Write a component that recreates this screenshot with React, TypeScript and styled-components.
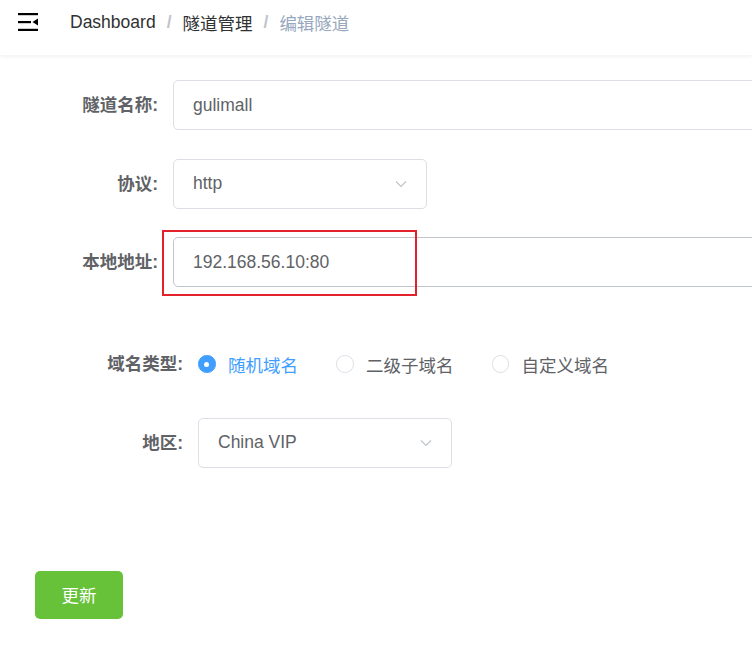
import React from "react";
import styled, { createGlobalStyle } from "styled-components";

const Global = createGlobalStyle`
  html, body { margin: 0; padding: 0; background: #fff; overflow: hidden; }
  body { font-family: "Liberation Sans", "Noto Sans CJK SC", sans-serif; color: #606266; }
  * { box-sizing: border-box; }
`;

const Page = styled.div`
  width: 752px;
  height: 646px;
  overflow: hidden;
  position: relative;
`;

const Header = styled.header`
  height: 55px;
  padding-bottom: 11px;
  display: flex;
  align-items: center;
  background: #fff;
  box-shadow: 0 1px 5px rgba(0, 21, 41, 0.08);
  position: relative;
  z-index: 1;
`;

const Hamburger = styled.div`
  width: 20px;
  height: 18px;
  margin-left: 18px;
  display: flex;
`;

const Breadcrumb = styled.nav`
  display: flex;
  align-items: center;
  margin-left: 32px;
  font-size: 17.5px;
`;

const Crumb = styled.span<{ $last?: boolean }>`
  color: ${(p) => (p.$last ? "#97a8be" : "#303133")};
`;

const Sep = styled.span`
  color: #c0c4cc;
  margin: 0 11px;
  font-weight: bold;
`;

const Main = styled.main`
  padding: 25px 0 0 35px;
`;

const Form = styled.form<{ $labelWidth: number }>`
  display: grid;
  grid-template-columns: ${(p) => p.$labelWidth}px 1fr;
  row-gap: 28.5px;
  align-items: center;
  & + & {
    margin-top: 52px;
  }
`;

const Label = styled.label`
  text-align: right;
  padding-right: 15px;
  font-size: 17.5px;
  font-weight: bold;
  color: #606266;
  line-height: 50px;
`;

const Field = styled.div`
  display: flex;
  align-items: center;
  height: 50px;
  position: relative;
`;

const Input = styled.div<{ $width: number; $hover?: boolean }>`
  width: ${(p) => p.$width}px;
  height: 50px;
  border: 1px solid ${(p) => (p.$hover ? "#c0c4cc" : "#dcdfe6")};
  border-radius: 5px;
  padding: 0 19px;
  display: flex;
  align-items: center;
  justify-content: space-between;
  font-size: 17.5px;
  color: #606266;
  flex-shrink: 0;
  background: #fff;
`;

const Highlight = styled.div`
  position: absolute;
  left: -11px;
  top: -7px;
  width: 255px;
  height: 66px;
  border: 2px solid #e3212b;
  pointer-events: none;
`;

const RadioGroup = styled.div`
  display: flex;
  align-items: center;
`;

const Radio = styled.span`
  display: inline-flex;
  align-items: center;
  margin-right: 38px;
`;

const RadioCircle = styled.span<{ $checked?: boolean }>`
  width: 17.5px;
  height: 17.5px;
  border-radius: 50%;
  border: 1px solid ${(p) => (p.$checked ? "#409eff" : "#dcdfe6")};
  background: ${(p) => (p.$checked ? "#409eff" : "#fff")};
  display: inline-flex;
  align-items: center;
  justify-content: center;
  &::after {
    content: "";
    width: 5px;
    height: 5px;
    border-radius: 50%;
    background: #fff;
    display: ${(p) => (p.$checked ? "block" : "none")};
  }
`;

const RadioText = styled.span<{ $checked?: boolean }>`
  margin-left: 12.5px;
  font-size: 17.5px;
  color: ${(p) => (p.$checked ? "#409eff" : "#606266")};
`;

const Actions = styled.div`
  margin-top: 103px;
`;

const Button = styled.button`
  width: 88px;
  height: 48px;
  border: none;
  border-radius: 5px;
  background: #67c23a;
  color: #fff;
  font-size: 17.5px;
  font-family: inherit;
  cursor: pointer;
`;

const Chevron = () => (
  <svg width="12" height="8" viewBox="0 0 12 8">
    <polyline points="1,1.5 6,6.5 11,1.5" fill="none" stroke="#c0c4cc" strokeWidth="1.2" />
  </svg>
);

const HamburgerIcon = () => (
  <svg width="20" height="18" viewBox="0 0 20 18">
    <rect x="0" y="0" width="20" height="2.2" fill="#000" />
    <rect x="0" y="8" width="13" height="2.2" fill="#000" />
    <polygon points="20,5.5 20,12.5 14.5,9" fill="#000" />
    <rect x="0" y="15.8" width="20" height="2.2" fill="#000" />
  </svg>
);

export default function App() {
  return (
    <Page>
      <Global />
      <Header>
        <Hamburger>
          <HamburgerIcon />
        </Hamburger>
        <Breadcrumb>
          <Crumb>Dashboard</Crumb>
          <Sep>/</Sep>
          <Crumb>隧道管理</Crumb>
          <Sep>/</Sep>
          <Crumb $last>编辑隧道</Crumb>
        </Breadcrumb>
      </Header>
      <Main>
        <Form $labelWidth={138}>
          <Label>隧道名称:</Label>
          <Field>
            <Input $width={640}>gulimall</Input>
          </Field>
          <Label>协议:</Label>
          <Field>
            <Input $width={254}>
              http
              <Chevron />
            </Input>
          </Field>
          <Label>本地地址:</Label>
          <Field>
            <Input $width={640} $hover>192.168.56.10:80</Input>
            <Highlight />
          </Field>
        </Form>
        <Form $labelWidth={163}>
          <Label>域名类型:</Label>
          <Field>
            <RadioGroup>
              <Radio>
                <RadioCircle $checked />
                <RadioText $checked>随机域名</RadioText>
              </Radio>
              <Radio>
                <RadioCircle />
                <RadioText>二级子域名</RadioText>
              </Radio>
              <Radio>
                <RadioCircle />
                <RadioText>自定义域名</RadioText>
              </Radio>
            </RadioGroup>
          </Field>
          <Label>地区:</Label>
          <Field>
            <Input $width={254}>
              China VIP
              <Chevron />
            </Input>
          </Field>
        </Form>
        <Actions>
          <Button type="button">更新</Button>
        </Actions>
      </Main>
    </Page>
  );
}
